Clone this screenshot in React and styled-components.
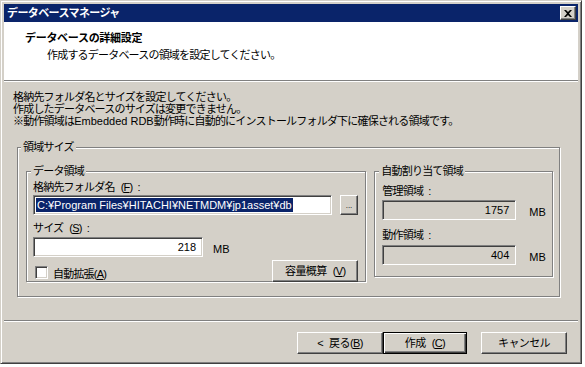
import React from "react";
import styled, { createGlobalStyle, css } from "styled-components";

const GlobalStyle = createGlobalStyle`
  html, body { margin: 0; padding: 0; background: #ffffff; }
  body {
    font-family: "Liberation Sans", "Noto Sans CJK JP", sans-serif;
    font-size: 11px;
    letter-spacing: -0.8px;
    color: #000;
  }
  * { box-sizing: border-box; }
`;

const Latin = styled.span`
  letter-spacing: 0;
`;

const Window = styled.div`
  width: 582px;
  height: 364px;
  display: flex;
  flex-direction: column;
  background: #d4d0c8;
  border: 1px solid;
  border-color: #d4d0c8 #404040 #404040 #d4d0c8;
  box-shadow: inset 1px 1px 0 #ffffff, inset -1px -1px 0 #808080;
  padding: 3px;
`;

const TitleBar = styled.div`
  height: 18px;
  flex: none;
  display: flex;
  align-items: center;
  justify-content: space-between;
  background: #0a246a;
  padding: 0 2px 0 3px;
`;

const TitleText = styled.span`
  color: #fff;
  font-weight: bold;
  font-size: 11px;
  letter-spacing: -0.6px;
  line-height: 14px;
`;

const CloseButton = styled.div`
  width: 16px;
  height: 14px;
  background: #d4d0c8;
  border: 1px solid;
  border-color: #ffffff #404040 #404040 #ffffff;
  box-shadow: inset -1px -1px 0 #808080;
  display: flex;
  align-items: center;
  justify-content: center;
`;

const Header = styled.div`
  height: 58px;
  flex: none;
  background: #ffffff;
  padding: 9px 0 0 21px;
`;

const HeaderTitle = styled.div`
  font-weight: bold;
  letter-spacing: -0.3px;
  line-height: 14px;
`;

const HeaderSub = styled.div`
  line-height: 14px;
  margin-top: 3px;
  padding-left: 22px;
`;

const Separator = styled.div`
  height: 2px;
  flex: none;
  border-top: 1px solid #808080;
  border-bottom: 1px solid #ffffff;
`;

const Body = styled.div`
  flex: 1;
  padding: 9px 0 0 9px;
`;

const Notes = styled.div`
  line-height: 12px;
`;

const Group = styled.fieldset`
  margin: 0;
  min-width: 0;
  border: 1px solid #808080;
  box-shadow: inset 1px 1px 0 #ffffff, 1px 1px 0 #ffffff;
  padding: ${(p) => p.$pad || "0"};
  ${(p) => p.$width && css`width: ${p.$width}px;`}
  ${(p) => p.$height && css`height: ${p.$height}px;`}
`;

const OuterGroup = styled(Group)`
  margin: 14px 0 0 4px;
  width: 543px;
`;

const Legend = styled.legend`
  padding: 0 2px;
  margin-left: ${(p) => p.$ml || 0}px;
  line-height: 12px;
  font-size: 11px;
  background: #d4d0c8;
`;

const GroupRow = styled.div`
  display: flex;
  align-items: flex-start;
  gap: 8px;
`;

const Label = styled.div`
  line-height: 12px;
  margin-top: ${(p) => p.$mt || 0}px;
`;

const Gap = styled.span`
  letter-spacing: 0;
  padding-right: ${(p) => p.$w || 3}px;
`;

const FieldRow = styled.div`
  display: flex;
  align-items: ${(p) => p.$align || "center"};
  justify-content: ${(p) => p.$justify || "flex-start"};
  gap: ${(p) => p.$gap || 8}px;
  margin-top: ${(p) => p.$mt || 0}px;
`;

const Field = styled.div`
  width: ${(p) => p.$w}px;
  height: 20px;
  background: ${(p) => (p.$readOnly ? "#d4d0c8" : "#ffffff")};
  border: 1px solid;
  border-color: #808080 #ffffff #ffffff #808080;
  box-shadow: inset 1px 1px 0 #404040, inset -1px -1px 0 #d4d0c8;
  display: flex;
  align-items: center;
  justify-content: ${(p) => (p.$right ? "flex-end" : "flex-start")};
  padding: 0 ${(p) => (p.$right ? 6 : 1)}px 0 2px;
  line-height: 14px;
  letter-spacing: 0;
  white-space: nowrap;
  overflow: hidden;
`;

const Selected = styled.span`
  background: #0a246a;
  color: #ffffff;
  line-height: 14px;
  padding: 0 1px;
`;

const Unit = styled.span`
  line-height: 12px;
  letter-spacing: 0;
  padding-top: ${(p) => p.$pt || 0}px;
`;

const Button = styled.button`
  font: inherit;
  font-size: 11px;
  letter-spacing: -0.6px;
  color: #000;
  width: ${(p) => p.$w}px;
  height: ${(p) => p.$h || 22}px;
  padding: 0;
  background: #d4d0c8;
  border: 1px solid;
  border-color: #ffffff #404040 #404040 #ffffff;
  box-shadow: inset -1px -1px 0 #808080;
  display: flex;
  align-items: center;
  justify-content: center;
  line-height: 12px;
  cursor: default;
  ${(p) =>
    p.$default &&
    css`
      border: 1px solid #000;
      box-shadow: inset 1px 1px 0 #ffffff, inset -1px -1px 0 #404040,
        inset -2px -2px 0 #808080;
    `}
`;

const ButtonLabel = styled.span`
  white-space: nowrap;
`;

const Dots = styled.span`
  font-size: 8px;
  line-height: 8px;
  letter-spacing: 0;
  padding-top: 2px;
`;

const CheckRow = styled.div`
  display: flex;
  align-items: center;
  gap: 5px;
  padding-left: 2px;
  padding-top: 3px;
`;

const CheckBox = styled.span`
  width: 13px;
  height: 13px;
  background: #ffffff;
  border: 1px solid;
  border-color: #808080 #ffffff #ffffff #808080;
  box-shadow: inset 1px 1px 0 #404040, inset -1px -1px 0 #d4d0c8;
`;

const Footer = styled.div`
  height: 40px;
  flex: none;
  display: flex;
  flex-direction: column;
`;

const ButtonBar = styled.div`
  display: flex;
  justify-content: flex-end;
  padding: 10px 11px 0 0;
  gap: 14px;
`;

const ButtonPair = styled.div`
  display: flex;
`;

export default function App() {
  return (
    <>
      <GlobalStyle />
      <Window>
        <TitleBar>
          <TitleText>データベースマネージャ</TitleText>
          <CloseButton>
            <svg width="8" height="7" viewBox="0 0 8 7">
              <path d="M0 0h2l2 2 2-2h2L5 3.5 8 7H6L4 5 2 7H0l3-3.5z" fill="#000" />
            </svg>
          </CloseButton>
        </TitleBar>
        <Header>
          <HeaderTitle>データベースの詳細設定</HeaderTitle>
          <HeaderSub>作成するデータベースの領域を設定してください。</HeaderSub>
        </Header>
        <Separator />
        <Body>
          <Notes>
            格納先フォルダ名とサイズを設定してください。
            <br />
            作成したデータベースのサイズは変更できません。
            <br />
            ※動作領域は<Latin>Embedded RDB</Latin>動作時に自動的にインストールフォルダ下に確保される領域です。
          </Notes>
          <OuterGroup $pad="12px 6px 14px 8px">
            <Legend $ml={-5}>領域サイズ</Legend>
            <GroupRow>
              <Group $width={341} $height={117} $pad="4px 7px 0 6px">
                <Legend $ml={-2}>データ領域</Legend>
                <Label>
                  格納先フォルダ名<Gap $w={3}> </Gap>(<u>F</u>)<Gap $w={2}> </Gap>:
                </Label>
                <FieldRow $mt={2}>
                  <Field $w={299}>
                    <Selected>C:¥Program Files¥HITACHI¥NETMDM¥jp1asset¥db</Selected>
                  </Field>
                  <Button $w={18} $h={20}>
                    <Dots>...</Dots>
                  </Button>
                </FieldRow>
                <Label $mt={7}>
                  サイズ<Gap $w={3}> </Gap>(<u>S</u>)<Gap $w={2}> </Gap>:
                </Label>
                <FieldRow $mt={3} $gap={10}>
                  <Field $w={170} $right>
                    218
                  </Field>
                  <Unit $pt={4}>MB</Unit>
                </FieldRow>
                <FieldRow $mt={3} $justify="space-between">
                  <CheckRow>
                    <CheckBox />
                    <span>
                      自動拡張(<u>A</u>)
                    </span>
                  </CheckRow>
                  <Button $w={86}>
                    <ButtonLabel>
                      容量概算<Gap $w={3}> </Gap>(<u>V</u>)
                    </ButtonLabel>
                  </Button>
                </FieldRow>
              </Group>
              <Group $width={179} $height={112} $pad="8px 0 0 7px">
                <Legend $ml={-3}>自動割り当て領域</Legend>
                <Label>
                  管理領域<Gap $w={2}> </Gap>:
                </Label>
                <FieldRow $mt={3} $gap={13}>
                  <Field $w={134} $right $readOnly>
                    1757
                  </Field>
                  <Unit $pt={3}>MB</Unit>
                </FieldRow>
                <Label $mt={9}>
                  動作領域<Gap $w={2}> </Gap>:
                </Label>
                <FieldRow $mt={4} $gap={13}>
                  <Field $w={134} $right $readOnly>
                    404
                  </Field>
                  <Unit $pt={3}>MB</Unit>
                </FieldRow>
              </Group>
            </GroupRow>
          </OuterGroup>
        </Body>
        <Footer>
          <Separator />
          <ButtonBar>
            <ButtonPair>
              <Button $w={86}>
                <ButtonLabel>
                  &lt;<Gap $w={3}> </Gap>戻る(<u>B</u>)
                </ButtonLabel>
              </Button>
              <Button $w={84} $default>
                <ButtonLabel>
                  作成<Gap $w={3}> </Gap>(<u>C</u>)
                </ButtonLabel>
              </Button>
            </ButtonPair>
            <Button $w={86}>
              <ButtonLabel>キャンセル</ButtonLabel>
            </Button>
          </ButtonBar>
        </Footer>
      </Window>
    </>
  );
}
